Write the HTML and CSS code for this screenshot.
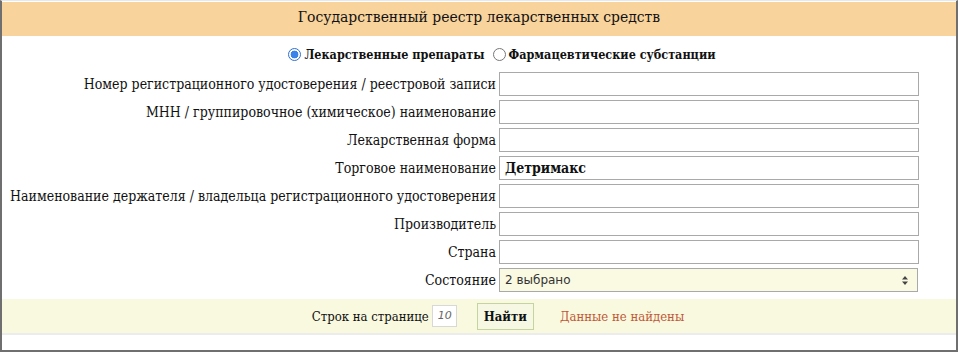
FILE: index.html
```html
<!DOCTYPE html>
<html lang="ru">
<head>
<meta charset="utf-8">
<title>Государственный реестр лекарственных средств</title>
<link rel="stylesheet" href="styles.css">
</head>
<body>
<div class="frame">
  <div class="header">Государственный реестр лекарственных средств</div>
  <div class="kind">
    <label class="kind-opt"><span class="radio checked"></span>Лекарственные препараты</label>
    <label class="kind-opt"><span class="radio"></span>Фармацевтические субстанции</label>
  </div>
  <div class="form">
    <div class="lbl">Номер регистрационного удостоверения / реестровой записи</div>
    <div class="field"></div>
    <div class="lbl">МНН / группировочное (химическое) наименование</div>
    <div class="field"></div>
    <div class="lbl">Лекарственная форма</div>
    <div class="field"></div>
    <div class="lbl">Торговое наименование</div>
    <div class="field bold">Детримакс</div>
    <div class="lbl">Наименование держателя / владельца регистрационного удостоверения</div>
    <div class="field"></div>
    <div class="lbl">Производитель</div>
    <div class="field"></div>
    <div class="lbl">Страна</div>
    <div class="field"></div>
    <div class="lbl">Состояние</div>
    <div class="select"><span>2 выбрано</span>
      <svg class="arrows" width="6" height="9" viewBox="0 0 6 9"><path d="M3 0 L6 3.5 L0 3.5 Z M3 9 L6 5.5 L0 5.5 Z" fill="#444"/></svg>
    </div>
  </div>
  <div class="footer">
    <span class="rows-lbl">Строк на странице</span>
    <span class="rows-inp">10</span>
    <span class="btn">Найти</span>
    <span class="msg">Данные не найдены</span>
  </div>
  <div class="tail"></div>
</div>
</body>
</html>
```

FILE: styles.css
```css
html, body {
  margin: 0;
  padding: 0;
  background: #fff;
}
.frame {
  box-sizing: border-box;
  width: 958px;
  height: 352px;
  border: 2px solid #6f6f6f;
  border-top: 1px solid #e8e8e8;
  font-family: "DejaVu Serif Condensed", "DejaVu Serif", serif;
  font-stretch: condensed;
  color: #111;
  padding-top: 1px;
}
.header {
  background: #f9d39c;
  height: 34px;
  line-height: 31px;
  text-align: center;
  font-size: 15.5px;
}
.kind {
  display: flex;
  justify-content: center;
  gap: 8px;
  padding-top: 6px;
  height: 24px;
  font-weight: bold;
  font-size: 12.5px;
  align-items: center;
  padding-left: 46px;
}
.kind-opt {
  display: flex;
  align-items: center;
  gap: 3px;
}
.radio {
  box-sizing: border-box;
  width: 13px;
  height: 13px;
  border-radius: 50%;
  border: 1px solid #777;
  background: #fff;
}
.radio.checked {
  border: 1px solid #2f6fd0;
  background: radial-gradient(circle, #3b82e8 0 3.6px, #fff 4.2px);
}
.form {
  display: grid;
  grid-template-columns: 1fr 420px;
  column-gap: 3px;
  row-gap: 4px;
  padding: 6px 37px 0 0;
}
.lbl {
  text-align: right;
  font-size: 14px;
  line-height: 24px;
  height: 24px;
}
.field {
  box-sizing: border-box;
  height: 24px;
  border: 1px solid #a9a9a9;
  background: #fff;
  padding: 0 5px;
  line-height: 22px;
  font-size: 14px;
}
.field.bold {
  font-weight: bold;
}
.select {
  box-sizing: border-box;
  height: 24px;
  width: 419px;
  border: 1px solid #a9a9a9;
  background: #fafae3;
  display: flex;
  align-items: center;
  justify-content: space-between;
  padding: 0 9px 0 5px;
  font-family: "DejaVu Sans", Verdana, sans-serif;
  font-stretch: normal;
  font-size: 12px;
  color: #333;
}
.arrows {
  display: block;
}
.footer {
  margin-top: 7px;
  height: 34px;
  background: #f9f9df;
  display: flex;
  align-items: center;
  justify-content: center;
  font-size: 13px;
  padding-left: 38px;
}
.rows-lbl {
  margin-right: 3px;
}
.rows-inp {
  box-sizing: border-box;
  width: 25px;
  height: 22px;
  border: 1px solid #d8d8d8;
  background: #fff;
  font-family: "DejaVu Sans", Verdana, sans-serif;
  font-stretch: normal;
  font-style: italic;
  font-size: 11px;
  color: #666;
  line-height: 20px;
  padding-left: 5px;
  margin-right: 20px;
}
.btn {
  box-sizing: border-box;
  height: 27px;
  line-height: 25px;
  padding: 0 6px;
  border: 1px solid #c5d3a0;
  background: #f6f8e4;
  font-weight: bold;
  font-size: 13px;
  margin-right: 26px;
}
.msg {
  color: #c05a3a;
  font-size: 13px;
}
.tail {
  border-top: 2px solid #ececec;
}
```
